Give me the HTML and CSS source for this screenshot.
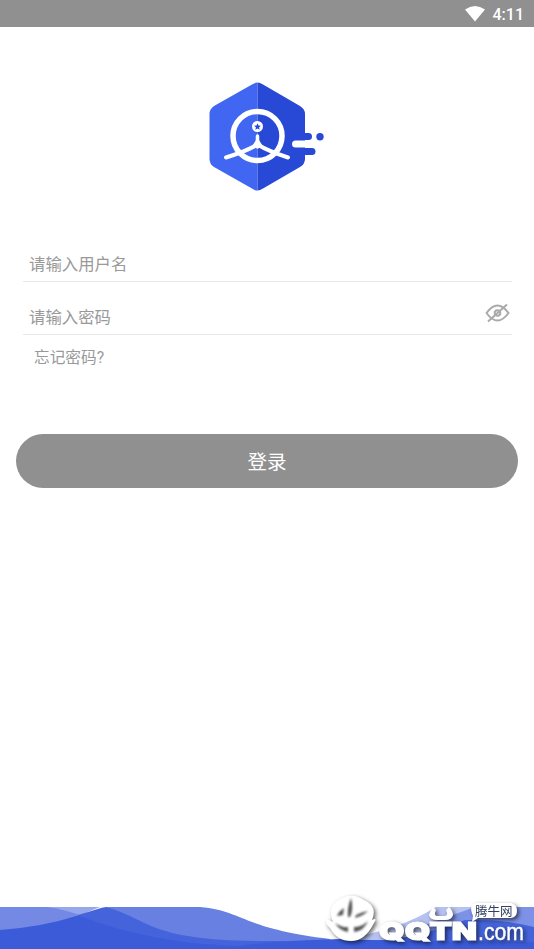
FILE: index.html
```
<!DOCTYPE html>
<html lang="zh-CN">
<head>
<meta charset="utf-8">
<title>登录</title>
<link rel="stylesheet" href="styles.css">
</head>
<body>
<header class="status">
  <svg class="wifi" width="20" height="16" viewBox="0 0 20 16"><path d="M0 3.500Q10-3.500 20 3.500L10 15.500Z"/></svg>
  <span class="clock">4:11</span>
</header>
<main class="login">
  <svg class="logo" width="130" height="120" viewBox="0 0 130 120">
    <path fill="#4166f2" d="M57.500 7.500Q55 7.500 52 9.500L14 31Q9.500 34 9.500 39V84Q9.500 89 14 92L52 113.500Q55 115.500 57.500 115.500Z"/>
    <path fill="#2749d6" d="M57.500 7.500Q60 7.500 63 9.500L100 31Q105 34 105 39V84Q105 89 100 92L63 113.500Q60 115.500 57.500 115.500Z"/>
    <circle class="ring" cx="57.500" cy="61" r="24.500"/>
    <path class="spoke" d="M26 82.500Q47 76 57.500 69.500Q68 76 88 82.500"/>
    <path class="stem" d="M57.500 61V72"/>
    <path fill="#fff" d="M56 65H59L64 73H51Z"/>
    <circle cx="57.500" cy="51.500" r="5.500" fill="#fff"/>
    <path fill="#2749d6" d="M57.500 48.200l1 2.200 2.400.3-1.800 1.600.5 2.500-2.100-1.200-2.100 1.200.5-2.500-1.800-1.600 2.400-.3z"/>
    <path fill="#2749d6" d="M100 58H108.500a3.500 3.500 0 0 1 0 7H100ZM100 73H112a3.500 3.500 0 0 1 0 7H100Z"/>
    <path class="bar" d="M95.500 69H109"/>
    <circle cx="120" cy="61.700" r="3.700" fill="#2749d6"/>
  </svg>
  <form class="form">
    <div class="field">请输入用户名</div>
    <div class="field password">
      <span>请输入密码</span>
      <svg class="eye" width="25" height="20" viewBox="0 0 25 20"><path d="M1.500 10Q12.500-5 23.500 10Q12.500 25 1.500 10Z"/><circle cx="12.500" cy="10" r="2.800"/><path d="M3 18.500L22 1.500"/></svg>
    </div>
    <a class="forgot">忘记密码?</a>
  </form>
  <button class="submit">登录</button>
</main>
<footer class="footer">
  <svg class="waves" width="534" height="42" viewBox="0 0 534 42">
    <path fill="#97a7eb" d="M45 0H100L78 9Z"/>
    <path fill="#7389e4" d="M0 0H47Q62 2 80 8V24H0Z"/>
    <path fill="#6780e2" d="M105 0H200C244 4 240 21 330 32V42H105Z"/>
    <path fill="#b6c2f2" d="M340 32Q396 25 436 0H534V42H340Z"/>
    <path fill="#7d92e7" d="M425 18Q450 9 475 0H534V42H425Z"/>
    <path fill="#4564dc" d="M78 8L101 1Q105-.5 109 1C150 13 150 34 265 34Q340 34 390 33Q435 25 465 13Q505 12 534 20V42H78Z"/>
    <path fill="#3b5bd9" d="M0 23Q42 20 78 8.500C110 20 160 37 240 39Q270 34 340 32Q380 34 534 35V42H0Z"/>
  </svg>
  <svg class="mark" width="214" height="64" viewBox="320 885 214 64">
    <g fill="#fff">
      <path d="M327 919Q324 923 330 928Q337 941 351 941Q365 941 374 923Q378 917 372 920Q378 906 364 900Q351 891 337 901Q327 908 333 922Z"/>
      <path class="shade" d="M351 898Q347 908 348 917L350 917Q354 909 351 898ZM337 916Q339 911 344 908L343 915ZM356 915Q362 912 368 911Q363 916 355 918ZM335 923Q342 928 348 927V932Q340 931 335 923ZM354 927Q362 927 368 921Q364 931 354 932Z"/>
      <path fill-rule="evenodd" d="M433 907Q430 911 429 915Q430 920 437 920H445Q452 920 453 915Q453 911 449 907L446 910Q449 916 444 916H438Q433 916 436 910Z"/>
      <path d="M476 903H511Q517 904 517 911Q517 917 511 918H478L472 922L473 916Q468 905 476 903Z"/>
      <text class="brand" x="379" y="939.500" textLength="98" lengthAdjust="spacingAndGlyphs">QQTN</text>
      <text class="com" x="478" y="939.500" textLength="46" lengthAdjust="spacingAndGlyphs">.com</text>
      <text class="label" x="475" y="915.500">腾牛网</text>
    </g>
  </svg>
</footer>
</body>
</html>
```
FILE: styles.css
```
body{margin:0;height:949px;background:#fff;display:flex;flex-direction:column;overflow:hidden;font-family:Roboto,"Noto Sans CJK SC",sans-serif}
.status{height:27px;background:#909090;display:flex;justify-content:flex-end;align-items:center;gap:8px;padding-right:10px;box-sizing:border-box;color:#fff}
.wifi{fill:#fff}
.clock{font-size:16px;font-weight:500;line-height:27px;padding-top:2px}
.login{flex:1;display:flex;flex-direction:column}
.logo{margin:48px 0 0 200px}
.ring{fill:none;stroke:#fff;stroke-width:5.5}
.spoke,.stem{fill:none;stroke:#fff;stroke-width:4;stroke-linecap:round;stroke-linejoin:round}
.stem{stroke-width:3.5}
.bar{stroke:#fff;stroke-width:7;stroke-linecap:round}
.form{margin:52px 22px 0 23px;display:flex;flex-direction:column}
.field{height:34px;border-bottom:1px solid #e8e8e8;padding-left:6px;font-size:16.4px;line-height:36px;color:#999}
.password{height:52px;display:flex;justify-content:space-between;line-height:71px}
.eye{margin:21px 2px 0 0;fill:none;stroke:#aaa;stroke-width:2}
.forgot{font-size:15.7px;line-height:24px;color:#999;margin:11px 0 0 11px}
.submit{margin:64px 16px 0;height:54px;border:0;border-radius:27px;background:#909090;color:#fff;font:19.500px/54px "Noto Sans CJK SC",sans-serif;padding:0}
.footer{height:42px;position:relative}
.waves{display:block}
.mark{position:absolute;right:0;bottom:0;filter:drop-shadow(2px 2px 2px rgba(0,0,0,.6))}
.shade{fill:#555;filter:blur(.8px)}
.brand{font:900 25px Inter,sans-serif;stroke:#fff;stroke-width:1.2px}
.com{font:24px "Liberation Sans",sans-serif;stroke:#fff;stroke-width:.4px}
.label{font:12.500px "Noto Sans CJK SC",sans-serif;fill:#33405f}
```
